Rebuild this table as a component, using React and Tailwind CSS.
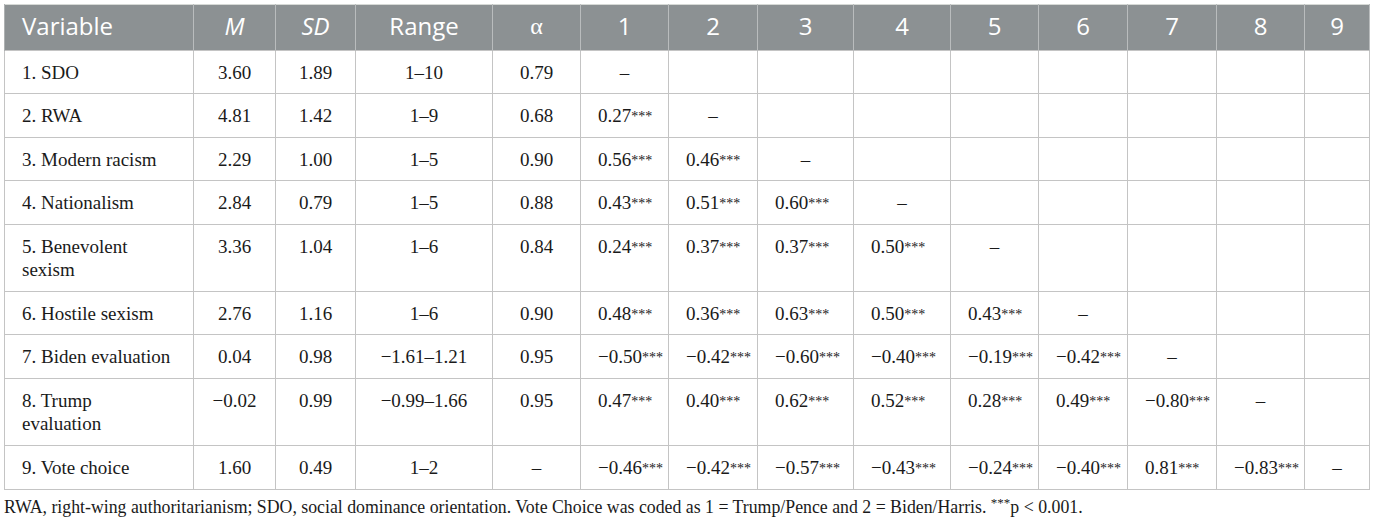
import React from "react";

const widths = [189, 82, 80, 137, 88, 88, 89, 96, 97, 88, 89, 89, 88, 65];

const rows = [
  { v: ["1. SDO"], m: "3.60", sd: "1.89", r: "1–10", a: "0.79", c: ["–"] },
  { v: ["2. RWA"], m: "4.81", sd: "1.42", r: "1–9", a: "0.68", c: ["0.27", "–"], tall: true },
  { v: ["3. Modern racism"], m: "2.29", sd: "1.00", r: "1–5", a: "0.90", c: ["0.56", "0.46", "–"] },
  { v: ["4. Nationalism"], m: "2.84", sd: "0.79", r: "1–5", a: "0.88", c: ["0.43", "0.51", "0.60", "–"], tall: true },
  { v: ["5. Benevolent", "sexism"], m: "3.36", sd: "1.04", r: "1–6", a: "0.84", c: ["0.24", "0.37", "0.37", "0.50", "–"], tall: true },
  { v: ["6. Hostile sexism"], m: "2.76", sd: "1.16", r: "1–6", a: "0.90", c: ["0.48", "0.36", "0.63", "0.50", "0.43", "–"] },
  { v: ["7. Biden evaluation"], m: "0.04", sd: "0.98", r: "−1.61–1.21", a: "0.95", c: ["−0.50", "−0.42", "−0.60", "−0.40", "−0.19", "−0.42", "–"], tall: true },
  { v: ["8. Trump", "evaluation"], m: "−0.02", sd: "0.99", r: "−0.99–1.66", a: "0.95", c: ["0.47", "0.40", "0.62", "0.52", "0.28", "0.49", "−0.80", "–"], tall: true },
  { v: ["9. Vote choice"], m: "1.60", sd: "0.49", r: "1–2", a: "–", c: ["−0.46", "−0.42", "−0.57", "−0.43", "−0.24", "−0.40", "0.81", "−0.83", "–"], tall: true },
];

const headers = ["1", "2", "3", "4", "5", "6", "7", "8", "9"];

function Th({ children, className = "" }) {
  return (
    <th
      className={
        "border-x border-[#b9bcbd] px-[17px] pt-[6px] pb-[10px] font-normal text-white text-[24px] leading-[27px] text-center " +
        className
      }
    >
      {children}
    </th>
  );
}

function Td({ children, className = "", tall = false }) {
  return (
    <td
      className={
        "border border-[#c4c4c4] pt-[10px] align-top text-[19px] leading-[23px] " +
        (tall ? "pb-[10px] " : "pb-[9px] ") +
        className
      }
    >
      {children}
    </td>
  );
}

export default function App() {
  return (
    <div className="bg-white w-[1375px] h-[520px] p-[4px] text-[#1a1a1a]" style={{ fontFamily: '"Liberation Serif", "Times New Roman", serif' }}>
      <table className="table-fixed border-collapse w-[1365px]">
        <colgroup>
          {widths.map((w, i) => (
            <col key={i} style={{ width: w }} />
          ))}
        </colgroup>
        <thead>
          <tr className="bg-[#8c9193] border-t border-[#d6d9d6]" style={{ fontFamily: '"Open Sans", Lato, sans-serif' }}>
            <Th className="text-left border-l-[#aeb1b2]">Variable</Th>
            <Th className="italic">M</Th>
            <Th className="italic">SD</Th>
            <Th>Range</Th>
            <Th>
              <span style={{ fontFamily: '"Liberation Serif", serif' }}>α</span>
            </Th>
            {headers.map((h) => (
              <Th key={h}>{h}</Th>
            ))}
          </tr>
        </thead>
        <tbody>
          {rows.map((row, ri) => (
            <tr key={ri}>
              <Td tall={row.tall} className="pl-[17px] pr-[8px] text-left">
                {row.v.map((l, i) => (
                  <div key={i}>{l}</div>
                ))}
              </Td>
              <Td tall={row.tall} className="text-center">{row.m}</Td>
              <Td tall={row.tall} className="text-center">{row.sd}</Td>
              <Td tall={row.tall} className="text-center">{row.r}</Td>
              <Td tall={row.tall} className="text-center">{row.a}</Td>
              {headers.map((h, ci) => {
                const val = row.c[ci];
                if (val === undefined) return <Td tall={row.tall} key={h} />;
                if (val === "–")
                  return (
                    <Td tall={row.tall} key={h} className="text-center">
                      –
                    </Td>
                  );
                return (
                  <Td tall={row.tall} key={h} className="text-left pl-[17px] whitespace-nowrap">
                    {val}
                    <sup className="text-[14px] relative top-[-1px]">***</sup>
                  </Td>
                );
              })}
            </tr>
          ))}
        </tbody>
      </table>
      <p className="mt-[6px] text-[17.8px] leading-[23px]">
        RWA, right-wing authoritarianism; SDO, social dominance orientation. Vote Choice was coded as 1 = Trump/Pence and 2 = Biden/Harris. <sup className="text-[13px]">***</sup>p &lt; 0.001.
      </p>
    </div>
  );
}
